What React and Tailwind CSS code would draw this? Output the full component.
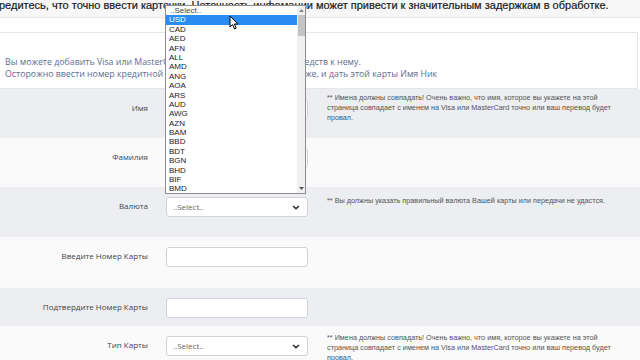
import React from 'react';

const currencies = ['USD', 'CAD', 'AED', 'AFN', 'ALL', 'AMD', 'ANG', 'AOA', 'ARS', 'AUD', 'AWG', 'AZN', 'BAM', 'BBD', 'BDT', 'BGN', 'BHD', 'BIF', 'BMD'];

const nameHint = '** Имена должны совпадать! Очень важно, что имя, которое вы укажете на этой страница совпадает с  именем на Visa или MasterCard точно или ваш перевод будет провал.';

const SelectBox = () => (
  <div className="h-[20px] w-[142px] rounded-[3px] border border-[#cfd3d8] bg-white flex items-center justify-between pl-[6px] pr-[7px] text-[8px] text-[#666]">
    <span>..Select..</span>
    <svg width="8" height="5" viewBox="0 0 8 5">
      <path d="M1 1 L4 3.6 L7 1" stroke="#333" strokeWidth="1.6" fill="none" />
    </svg>
  </div>
);

const TextBox = () => (
  <div className="h-[20px] w-[142px] rounded-[3px] border border-[#cfd3d8] bg-white" />
);

const Row = ({ label, bg, height, field, hint, hintTop = 'pt-[6px]' }) => (
  <div className={`flex ${bg}`} style={{ height }}>
    <div className="w-[148px] shrink-0 pt-[9px]">
      <div className="h-[20px] flex items-center justify-end text-[8px] text-[#444]">{label}</div>
    </div>
    <div className="w-[179px] shrink-0 pl-[18px] pt-[10px]">{field}</div>
    {hint && (
      <div className={`w-[287px] ${hintTop} font-['Liberation_Sans',Arial,sans-serif] text-[7.25px] leading-[10px] text-[#555]`}>{hint}</div>
    )}
  </div>
);

const Cursor = () => (
  <svg className="absolute left-[229px] top-[15px]" width="10" height="15" viewBox="0 0 10 15">
    <path d="M1 1 L1 12 L3.6 9.6 L5.6 14 L7.2 13.2 L5.3 9 L8.8 9 Z" fill="white" stroke="black" strokeWidth="1" strokeLinejoin="round" />
  </svg>
);

const Dropdown = () => (
  <div className="absolute left-[165px] top-[5px] w-[141px] h-[189px] border border-[#8d8d8d] bg-white flex font-['Liberation_Sans',Arial,sans-serif] text-[8px] text-[#222]">
    <div className="flex-1 flex flex-col">
      <div className="h-[9.4px] leading-[9.4px] pl-[4px] text-[#444]">..Select..</div>
      {currencies.map((c, i) => (
        <div
          key={c}
          className={`h-[9.4px] leading-[9.4px] pl-[3px] ${i === 0 ? 'bg-[#2a8bf2] text-white' : ''}`}
        >
          {c}
        </div>
      ))}
    </div>
    <div className="w-[8px] bg-[#f0f0f0] flex flex-col items-center">
      <div className="h-[9px] flex items-center">
        <svg width="5" height="3" viewBox="0 0 5 3"><path d="M0 3 L2.5 0 L5 3 Z" fill="#888" /></svg>
      </div>
      <div className="w-[7px] h-[21px] bg-[#c4c4c4]" />
      <div className="flex-1" />
      <div className="h-[9px] flex items-center">
        <svg width="5" height="3" viewBox="0 0 5 3"><path d="M0 0 L2.5 3 L5 0 Z" fill="#555" /></svg>
      </div>
    </div>
  </div>
);

export default function App() {
  return (
    <div className="relative w-[640px] h-[360px] overflow-hidden bg-[#f7f7f7] font-['Open_Sans','Liberation_Sans',sans-serif]">
      <div className="h-[17px] flex items-start">
        <p className="-ml-[1px] whitespace-nowrap font-['Liberation_Sans',Arial,sans-serif] text-[11px] leading-[11px] text-[#1a1a1a] [-webkit-text-stroke:0.2px_#1a1a1a]">
          редитесь, что точно ввести карточки. Неточность инфомации может привести к значительным задержкам в обработке.
        </p>
      </div>
      <div className="border-t border-[#e6e6e6] bg-white">
        <div className="h-[14px]" />
        <div className="h-[57px] border-y border-r border-[#e6e6e6] bg-white mr-[2px] pl-[5px] pt-[23px] text-[8.8px] leading-[12px] text-[#5d6e90]">
          <p className="whitespace-nowrap">Вы можете добавить Visa или MasterCard свою карту для перевода средств к нему.</p>
          <p className="whitespace-nowrap">Осторожно ввести номер кредитной карты и другую информацию ниже, и дать этой карты Имя Ник</p>
        </div>
      </div>
      <div>
        <Row label="Имя" bg="bg-[#eceef1]" height={49} field={<TextBox />} hint={nameHint} hintTop="pt-[4px]" />
        <Row label="Фамилия" bg="bg-[#fafafb]" height={49} field={<TextBox />} />
        <Row label="Валюта" bg="bg-[#eceef1]" height={50} field={<SelectBox />} hint="** Вы должны указать правильный валюта Вашей карты или передачи не удастся." hintTop="pt-[9px]" />
        <Row label="Введите Номер Карты" bg="bg-[#fafafb]" height={51} field={<TextBox />} />
        <Row label="Подтвердите Номер Карты" bg="bg-[#eceef1]" height={38} field={<TextBox />} />
        <Row label="Тип Карты" bg="bg-[#fafafb]" height={50} field={<SelectBox />} hint={nameHint} hintTop="pt-[7px]" />
      </div>
      <Dropdown />
      <Cursor />
    </div>
  );
}
